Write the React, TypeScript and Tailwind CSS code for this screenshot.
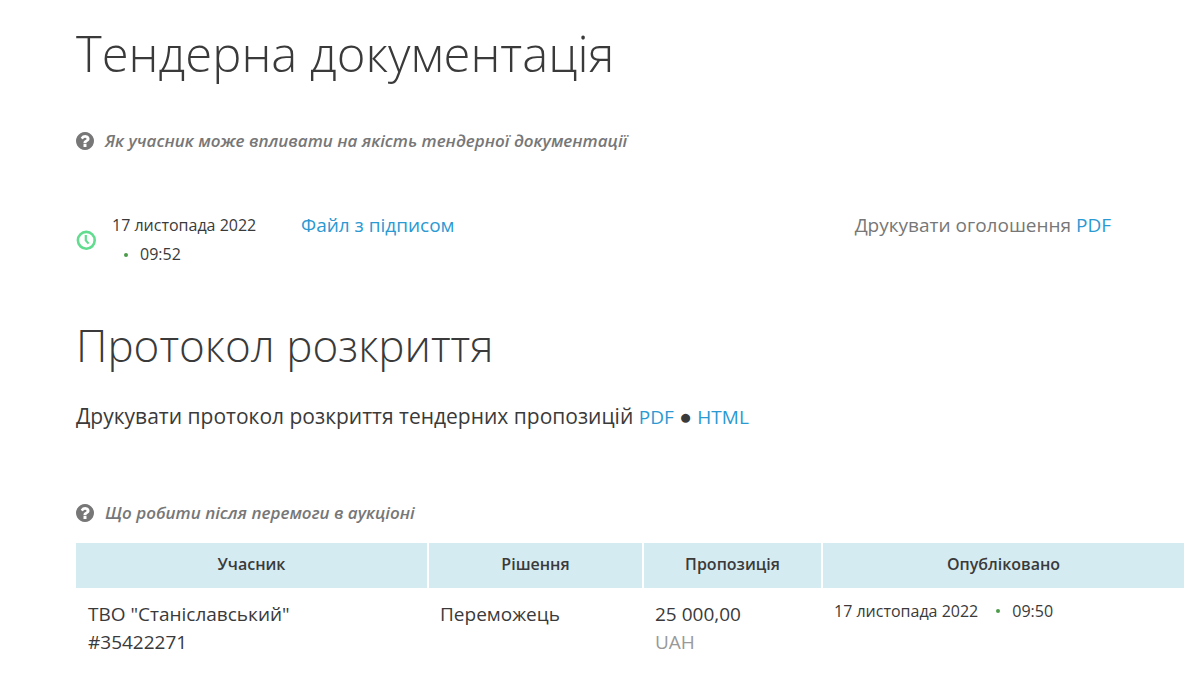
const bids = [
  {
    name: 'ТВО "Станіславський"',
    code: '#35422271',
    status: 'Переможець',
    amount: '25 000,00',
    currency: 'UAH',
    date: '17 листопада 2022',
    time: '09:50',
  },
]

function QuestionIcon() {
  return (
    <svg width="18" height="18" viewBox="128 128 1536 1536" fill="currentColor" className="shrink-0" aria-hidden="true">
      <path d="M1024 1376v-192q0-14-9-23t-23-9h-192q-14 0-23 9t-9 23v192q0 14 9 23t23 9h192q14 0 23-9t9-23zm256-672q0-88-55.5-163t-138.5-116-170-41q-243 0-371 213-15 24 8 42l132 100q7 6 19 6 16 0 25-12 53-68 86-92 34-24 86-24 48 0 85.5 26t37.5 59q0 38-20 61t-68 45q-63 28-115.5 86.5t-52.5 125.5v36q0 14 9 23t23 9h192q14 0 23-9t9-23q0-19 21.5-49.5t54.5-49.5q32-18 49-28.5t46-35 44.5-48 28-60.5 12.5-81zm384 192q0 209-103 385.5t-279.5 279.5-385.5 103-385.5-103-279.5-279.5-103-385.5 103-385.5 279.5-279.5 385.5-103 385.5 103 279.5 279.5 103 385.5z" />
    </svg>
  )
}

function ClockIcon() {
  return (
    <svg width="20" height="20" viewBox="0 0 20 20" fill="none" stroke="#62dc8f" strokeWidth="2.6" className="shrink-0" aria-hidden="true">
      <circle cx="10.3" cy="10.3" r="8.4" />
      <path d="M9.8 5v5.4l2.8 3.2" strokeWidth="2.2" />
    </svg>
  )
}

function HelpLink({ text }: { text: string }) {
  return (
    <a href="#" className="flex items-center gap-[11px] text-[#777]">
      <QuestionIcon />
      <span className="text-[17px] leading-6 font-semibold italic">{text}</span>
    </a>
  )
}

function Dot() {
  return <span className="size-1 shrink-0 rounded-full bg-[#4b9b4b]" />
}

export default function App() {
  return (
    <main className="min-h-screen bg-white pt-[23px] pr-4 pl-[76px] font-['Open_Sans',sans-serif] text-[#3a3a3a]">
      <h1 className="text-[49px] leading-[60px] font-light">Тендерна документація</h1>
      <div className="mt-[46px]">
        <HelpLink text="Як учасник може впливати на якість тендерної документації" />
      </div>

      <div className="mt-[58px] flex items-start">
        <div className="flex w-[225px] items-center gap-4">
          <ClockIcon />
          <div className="text-base leading-[29px]">
            <div>17 листопада 2022</div>
            <div className="flex items-center gap-3 pl-3">
              <Dot />
              09:52
            </div>
          </div>
        </div>
        <a href="#" className="text-[19px] leading-7 text-[#2b99d2]">Файл з підписом</a>
        <div className="mr-[73px] ml-auto text-[19px] leading-7 text-[#777]">
          Друкувати оголошення <a href="#" className="text-[#2b99d2]">PDF</a>
        </div>
      </div>

      <h2 className="mt-[46px] text-[44px] leading-[60px] font-light">Протокол розкриття</h2>
      <p className="mt-[25px] text-[21px] leading-8">
        Друкувати протокол розкриття тендерних пропозицій{' '}
        <a href="#" className="text-[19px] text-[#2b99d2]">PDF</a> ●{' '}
        <a href="#" className="text-[19px] text-[#2b99d2]">HTML</a>
      </p>

      <div className="mt-[68px]">
        <HelpLink text="Що робити після перемоги в аукціоні" />
      </div>
      <table className="mt-[18px] w-full table-fixed text-left">
        <thead>
          <tr className="h-[45px] text-center text-base">
            <th className="w-[352px] border-r-2 border-white bg-[#d5ebf2] pb-1 font-semibold">Учасник</th>
            <th className="w-[215px] border-r-2 border-white bg-[#d5ebf2] pb-1 font-semibold">Рішення</th>
            <th className="w-[179px] border-r-2 border-white bg-[#d5ebf2] pb-1 font-semibold">Пропозиція</th>
            <th className="bg-[#d5ebf2] pb-1 font-semibold">Опубліковано</th>
          </tr>
        </thead>
        <tbody>
          {bids.map(bid => (
            <tr key={bid.code} className="align-top text-[19px] leading-7">
              <td className="px-3 pt-3">
                {bid.name}
                <br />
                {bid.code}
              </td>
              <td className="px-3 pt-3">{bid.status}</td>
              <td className="px-3 pt-3">
                {bid.amount}
                <br />
                <span className="text-[#999]">{bid.currency}</span>
              </td>
              <td className="px-3 pt-[11px]">
                <div className="flex items-center text-base">
                  <span className="pr-[18px]">{bid.date}</span>
                  <Dot />
                  <span className="pl-3">{bid.time}</span>
                </div>
              </td>
            </tr>
          ))}
        </tbody>
      </table>
    </main>
  )
}
